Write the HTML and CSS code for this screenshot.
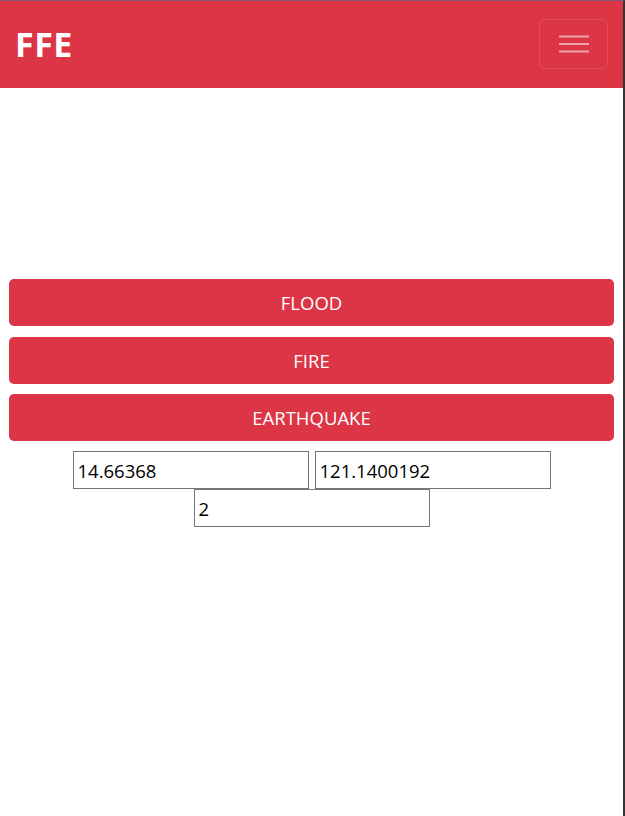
FILE: index.html
```html
<!DOCTYPE html>
<html>
<head>
<meta charset="utf-8">
<link rel="stylesheet" href="styles.css">
</head>
<body>
<div class="page">
  <header class="navbar">
    <span class="brand">FFE</span>
    <button class="toggler" aria-label="menu">
      <svg width="30" height="30" viewBox="0 0 30 30"><path d="M0 7.5h30M0 15h30M0 22.5h30" stroke="rgba(255,255,255,0.55)" stroke-width="2.2"/></svg>
    </button>
  </header>
  <main class="content">
    <button class="btn">FLOOD</button>
    <button class="btn">FIRE</button>
    <button class="btn">EARTHQUAKE</button>
    <div class="fields">
      <input class="field" type="text" value="14.66368">
      <input class="field" type="text" value="121.1400192">
      <input class="field" type="text" value="2">
    </div>
  </main>
</div>
</body>
</html>
```
FILE: styles.css
```css
html, body { margin: 0; padding: 0; background: #fff; }
body { font-family: "Open Sans", "Noto Sans", sans-serif; }
.page {
  width: 623px;
  min-height: 815px;
  border-top: 1px solid #7d5878;
  border-right: 2px solid #333;
  box-sizing: content-box;
}
.navbar {
  height: 87px;
  background: #dc3545;
  display: flex;
  align-items: center;
  justify-content: space-between;
  padding: 0 15px 0 15px;
}
.brand {
  color: #fff;
  font-weight: 700;
  font-size: 34px;
  letter-spacing: 0.5px;
  margin-top: -1px;
}
.toggler {
  width: 69px;
  height: 50px;
  background: transparent;
  border: 1px solid rgba(255,255,255,0.12);
  border-radius: 6px;
  display: flex;
  align-items: center;
  justify-content: center;
  padding: 0;
  margin-top: -1px;
}
.content {
  padding: 191px 9px 0 9px;
}
.btn {
  display: block;
  width: 100%;
  height: 47px;
  margin: 0 0 10.5px 0;
  background: #dc3545;
  color: #fff;
  border: none;
  border-radius: 5px;
  font-family: "Open Sans", "Noto Sans", sans-serif;
  font-size: 18.5px;
}
.fields {
  display: flex;
  flex-wrap: wrap;
  justify-content: center;
  column-gap: 6px;
  margin-top: -0.5px;
}
.field {
  width: 236px;
  height: 38px;
  box-sizing: border-box;
  border: 1px solid #767676;
  border-radius: 0;
  padding: 0 4px;
  font-family: "Open Sans", "Noto Sans", sans-serif;
  font-size: 18.5px;
  color: #000;
  margin: 0;
}
```
